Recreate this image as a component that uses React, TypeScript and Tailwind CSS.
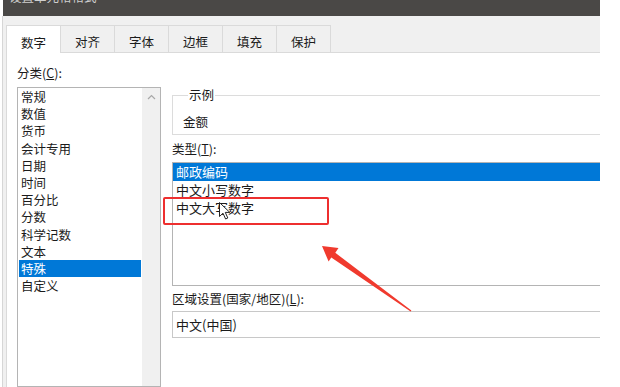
import React from 'react'

const categories = ['常规', '数值', '货币', '会计专用', '日期', '时间', '百分比', '分数', '科学记数', '文本', '特殊', '自定义']
const types = ['邮政编码', '中文小写数字', '中文大写数字']
const tabs = ['对齐', '字体', '边框', '填充', '保护']

export default function App() {
  return (
    <div className="relative w-[620px] h-[387px] overflow-hidden bg-white font-['Microsoft_YaHei','Noto_Sans_CJK_SC',sans-serif] text-[12.5px] text-[#1b1b1b]">
      <div className="w-[598px] h-full ml-[2px] flex flex-col overflow-hidden">
        {/* title bar, cut off at the top */}
        <div className="h-[16px] ml-[1px] bg-[#4a4846] overflow-hidden shrink-0">
          <div className="-mt-[10px] pl-[6px] leading-[14px] text-[#cfcfcf]">设置单元格格式</div>
        </div>

        <div className="flex-1 flex flex-col bg-[#f0f0f0] border-l border-[#d6d6d6] pl-[3px] pt-[9px]">
          {/* tabs */}
          <div className="flex items-end h-[28px] border-b border-[#dadada] shrink-0">
            <div className="w-[55px] h-[28px] -mb-px bg-white border border-b-0 border-[#dadada] text-center pt-[9px] leading-[16px]">数字</div>
            {tabs.map(t => (
              <div key={t} className="w-[54px] h-[27px] border-t border-r border-[#dadada] text-center pt-[8px] leading-[16px]">{t}</div>
            ))}
          </div>

          {/* tab panel */}
          <div className="flex-1 flex gap-[11px] pl-[10px] bg-white border-l border-[#dadada] overflow-hidden">
            <div className="w-[144px] flex flex-col shrink-0">
              <div className="mt-[12px] mb-[6px] leading-[16px]">分类(<span className="underline">C</span>):</div>
              <div className="flex-1 flex border border-[#b4b4b4] bg-white">
                <div className="flex-1 flex flex-col">
                  {categories.map(c => (
                    <div
                      key={c}
                      className={c === '特殊'
                        ? 'h-[17.2px] leading-[17.2px] ml-[1px] mr-[1px] pl-[2px] bg-[#0078d7] text-white'
                        : 'h-[17.2px] leading-[17.2px] pl-[3px]'}
                    >
                      {c}
                    </div>
                  ))}
                </div>
                <div className="w-[18px] bg-[#f0f0f0] flex justify-center pt-[6px]">
                  <svg width="9" height="6" viewBox="0 0 9 6">
                    <path d="M1 5 L4.5 1.5 L8 5" fill="none" stroke="#a8a8a8" strokeWidth="1.2" />
                  </svg>
                </div>
              </div>
            </div>

            <div className="w-[440px] flex flex-col shrink-0">
              <fieldset className="mt-[34px] border border-[#dcdcdc] pl-[10px] pb-[4px]">
                <legend className="ml-[5px] px-[1px] leading-[16px]">示例</legend>
                <div className="pt-[11px] leading-[16px]">金额</div>
              </fieldset>

              <div className="mt-[6px] mb-[5px] leading-[16px]">类型(<span className="underline">T</span>):</div>
              <div className="h-[124px] border border-[#b4b4b4] text-[13px]">
                {types.map((t, i) => (
                  <div
                    key={t}
                    className={i === 0
                      ? 'h-[18px] leading-[18px] pl-[3px] bg-[#0078d7] text-white'
                      : 'h-[18px] leading-[18px] pl-[3px]'}
                  >
                    {t}
                  </div>
                ))}
              </div>

              <div className="mt-[5px] mb-[4px] leading-[16px]">区域设置(国家/地区)(<span className="underline">L</span>):</div>
              <div className="h-[27px] border border-[#c8c8c8] pl-[3px] leading-[25px] text-[13px]">中文(中国)</div>
            </div>
          </div>
        </div>
      </div>

      {/* annotation: red box */}
      <div className="absolute left-[163px] top-[197px] w-[166px] h-[28px] border-2 border-[#ee2f2f] rounded-[2px]" />

      {/* mouse cursor */}
      <svg className="absolute left-[219px] top-[202px]" width="12" height="18" viewBox="0 0 12 18">
        <path d="M0.5 0.5 L0.5 14.5 L4 11.2 L6.6 17 L8.8 16 L6.3 10.4 L10.8 10.4 Z" fill="#fff" stroke="#222" strokeWidth="1" strokeLinejoin="round" />
      </svg>

      {/* annotation: red arrow */}
      <svg className="absolute left-0 top-0 pointer-events-none" width="620" height="387" viewBox="0 0 620 387">
        <polygon
          points="322,246 338.5,248 335.3,252.8 411.4,310.4 410.6,311.6 331.3,257.5 328.6,261.5"
          fill="#f03a2e"
        />
      </svg>
    </div>
  )
}
